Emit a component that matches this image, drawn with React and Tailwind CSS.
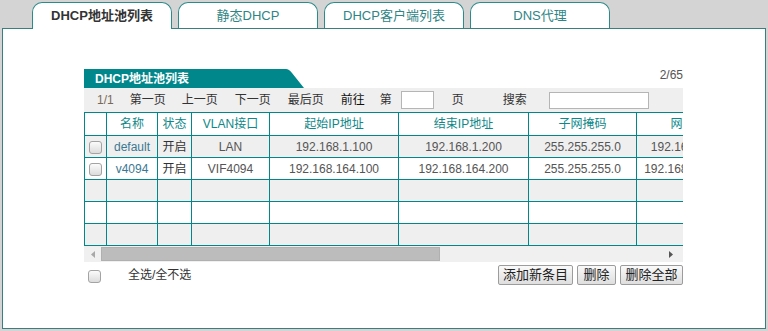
import React from 'react';

const tabs = ['DHCP地址池列表', '静态DHCP', 'DHCP客户端列表', 'DNS代理'];

const cols = [
  { w: 22, label: '' },
  { w: 51, label: '名称' },
  { w: 34, label: '状态' },
  { w: 78, label: 'VLAN接口' },
  { w: 129, label: '起始IP地址' },
  { w: 130, label: '结束IP地址' },
  { w: 108, label: '子网掩码' },
  { w: 92, label: '网关' },
  { w: 110, label: '主DNS' },
];

const rows = [
  ['default', '开启', 'LAN', '192.168.1.100', '192.168.1.200', '255.255.255.0', '192.168.1.1', ''],
  ['v4094', '开启', 'VIF4094', '192.168.164.100', '192.168.164.200', '255.255.255.0', '192.168.164.1', ''],
  null,
  null,
  null,
];

const buttons = [
  { label: '添加新条目', w: 'w-[75px]' },
  { label: '删除', w: 'w-[39px]' },
  { label: '删除全部', w: 'w-[63px]' },
];

function Checkbox() {
  return (
    <span className="inline-block w-[13px] h-[13px] rounded-[3px] border border-[#a3a3a3] bg-gradient-to-b from-[#fbfbfb] to-[#dcdcdc] align-middle" />
  );
}

export default function App() {
  return (
    <div className="w-[768px] h-[331px] bg-[#d4d4d4] pt-[2px] overflow-hidden font-['Liberation_Sans','Noto_Sans_CJK_SC',sans-serif]">
      <div className="flex pl-[32px] gap-[6px] h-[26px]">
        {tabs.map((t, i) => (
          <div
            key={t}
            className={
              'w-[140px] flex items-center justify-center rounded-t-[10px] border border-b-0 border-[#2b8a8a] bg-white text-[13px] relative z-10 ' +
              (i === 0 ? 'h-[27px] font-bold text-[#333]' : 'h-[26px] text-[#2f8585]')
            }
          >
            {t}
          </div>
        ))}
      </div>
      <div className="mx-[2px] h-[301px] border border-[#3a7e7e] bg-white pl-[81px] pt-[40px]">
        <div className="w-[599px]">
          <div className="flex justify-between items-end h-[19px]">
            <div className="flex h-[19px]">
              <div className="bg-[#00878c] text-white font-bold text-[12px] pl-[11px] pr-[2px] flex items-center w-[198px]">
                DHCP地址池列表
              </div>
              <svg width="22" height="19" viewBox="0 0 22 19">
                <path d="M0 0 L4 0 Q7 0 10 4 L22 19 L0 19 Z" fill="#00878c" />
              </svg>
            </div>
            <div className="text-[12px] text-[#555] mb-[4px]">2/65</div>
          </div>
          <div className="h-[24px] bg-[#efefef] flex items-center text-[12px] text-[#333]">
            <span className="ml-[13px] text-[#7a6a55]">1/1</span>
            <span className="ml-[16px]">第一页</span>
            <span className="ml-[16px]">上一页</span>
            <span className="ml-[17px]">下一页</span>
            <span className="ml-[17px]">最后页</span>
            <span className="ml-[17px] text-[#111]">前往</span>
            <span className="ml-[15px]">第</span>
            <span className="ml-[9px] w-[33px] h-[18px] border border-[#b5b5b5] bg-white" />
            <span className="ml-[18px]">页</span>
            <span className="ml-[39px]">搜索</span>
            <span className="ml-[22px] w-[100px] h-[17px] border border-[#b5b5b5] bg-white" />
          </div>
          <div className="overflow-hidden">
            <table className="border-collapse table-fixed text-[12px] w-[754px]">
              <colgroup>
                {cols.map((c, i) => (
                  <col key={i} style={{ width: c.w }} />
                ))}
              </colgroup>
              <thead>
                <tr className="h-[23px] bg-white">
                  {cols.map((c, i) => (
                    <th key={i} className="border border-[#00878c] font-normal text-[#0e8888] p-0 whitespace-nowrap">
                      {c.label}
                    </th>
                  ))}
                </tr>
              </thead>
              <tbody>
                {rows.map((r, ri) => (
                  <tr key={ri} className={'h-[22px] ' + (ri % 2 === 0 ? 'bg-[#efefef]' : 'bg-white')}>
                    <td className="border border-[#00878c] p-0 text-center">{r && <Checkbox />}</td>
                    {(r || ['', '', '', '', '', '', '', '']).map((v, ci) => (
                      <td
                        key={ci}
                        className={
                          'border border-[#00878c] p-0 text-center whitespace-nowrap ' +
                          (ci === 0 ? 'text-[#3b7892]' : ci === 1 ? 'text-[#333]' : 'text-[#555]')
                        }
                      >
                        {v}
                      </td>
                    ))}
                  </tr>
                ))}
              </tbody>
            </table>
          </div>
          <div className="h-[16px] bg-[#f0f0f0] flex items-center">
            <div className="w-[17px] flex justify-center">
              <svg width="4" height="7" viewBox="0 0 4 7">
                <path d="M4 0 L0 3.5 L4 7 Z" fill="#a8a8a8" />
              </svg>
            </div>
            <div className="w-[339px] h-[14px] bg-[#bcbcbc] border border-[#b0b0b0]" />
            <div className="flex-1" />
            <div className="w-[17px] flex justify-center mr-[4px]">
              <svg width="4" height="7" viewBox="0 0 4 7">
                <path d="M0 0 L4 3.5 L0 7 Z" fill="#555" />
              </svg>
            </div>
          </div>
          <div className="flex items-center mt-[2px] h-[21px]">
            <span className="ml-[4px] mt-[2px]">
              <Checkbox />
            </span>
            <span className="ml-[27px] text-[12px] text-[#333]">全选/全不选</span>
            <div className="flex-1" />
            <div className="flex gap-[4px]">
              {buttons.map((b) => (
                <button
                  key={b.label}
                  className={
                    b.w +
                    ' h-[20px] px-0 border border-[#9c9c9c] rounded-[2px] bg-gradient-to-b from-[#fafafa] to-[#dedede] text-[13px] leading-none text-[#222]'
                  }
                >
                  {b.label}
                </button>
              ))}
            </div>
          </div>
        </div>
      </div>
    </div>
  );
}
